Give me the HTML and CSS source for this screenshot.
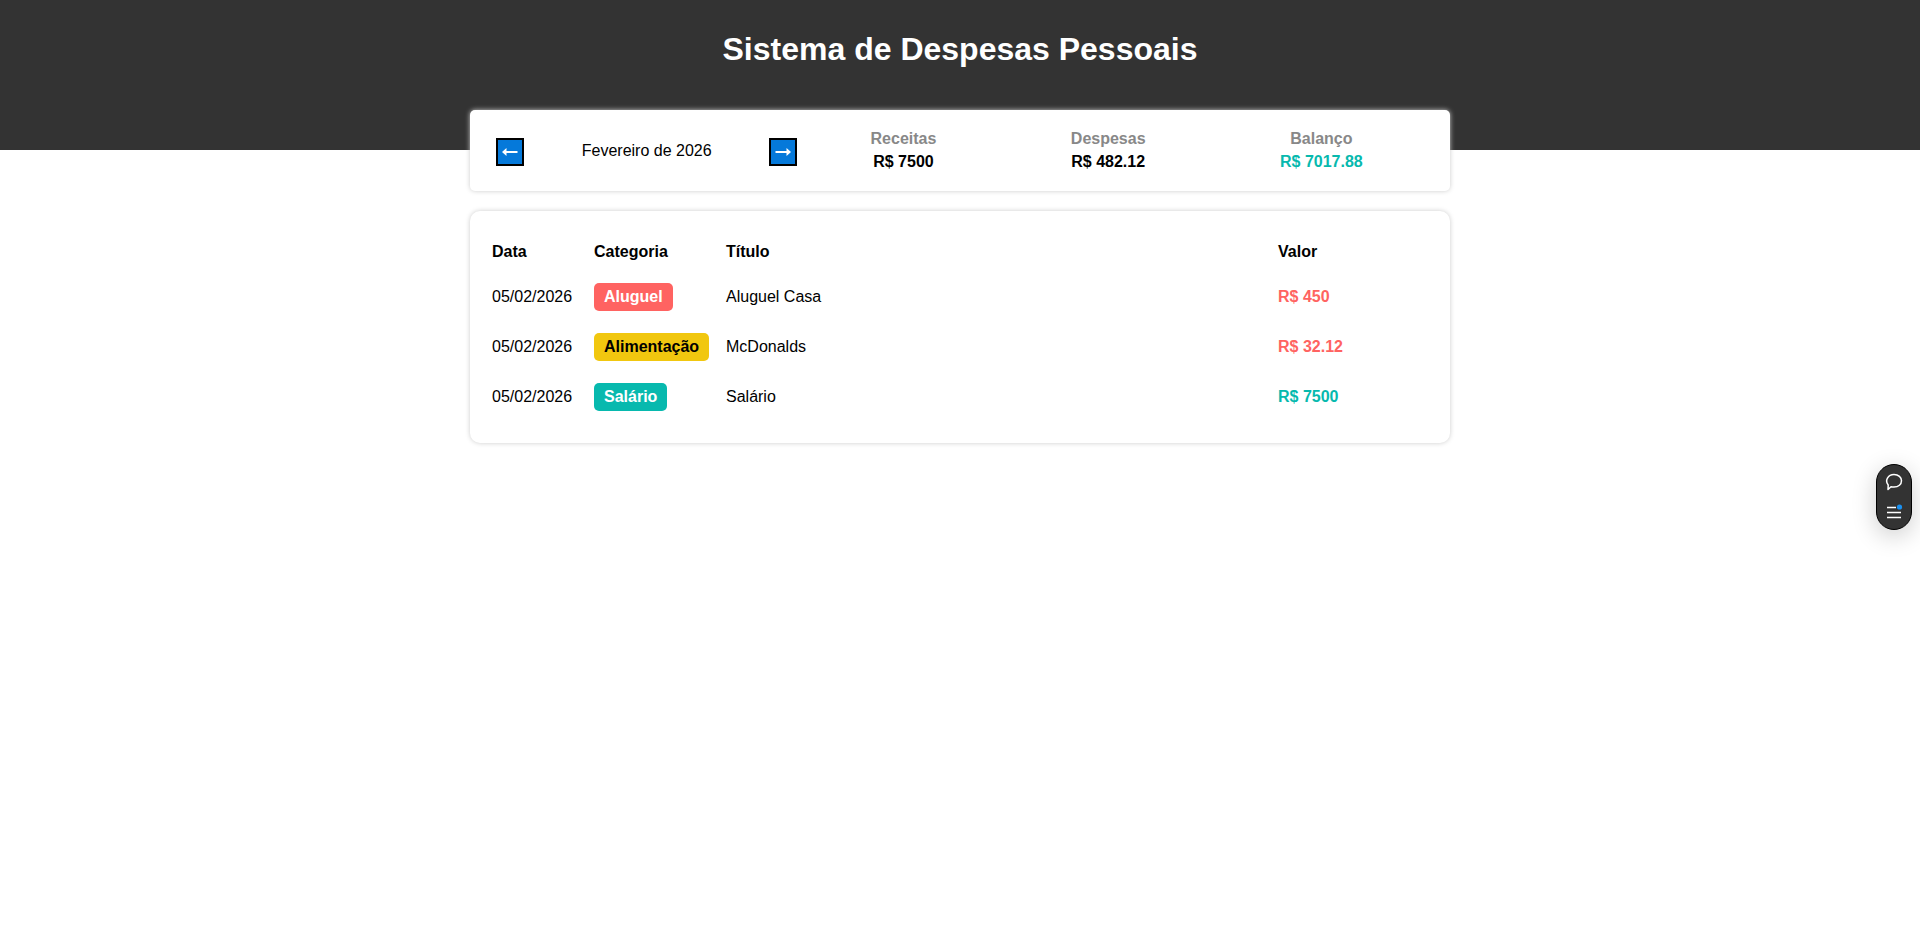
FILE: index.html
```
<!DOCTYPE html>
<html lang="pt-BR">
<head>
    <meta charset="UTF-8">
    <meta name="viewport" content="width=device-width, initial-scale=1.0">
    <title>Sistema de Despesas Pessoais</title>
    <link rel="stylesheet" href="styles.css">
</head>
<body>
    <header class="header">
        <h1>Sistema de Despesas Pessoais</h1>
    </header>
    <main class="container">
        <section class="info">
            <div class="month">
                <div class="month-arrow">
                    <button type="button" aria-label="Mês anterior">
                        <svg width="16" height="8" viewBox="0 0 16 8"><path d="M0 4 4.500 0V3H15.500V5H4.500V8Z" fill="#fff"/></svg>
                    </button>
                </div>
                <div class="month-title">Fevereiro de 2026</div>
                <div class="month-arrow">
                    <button type="button" aria-label="Próximo mês">
                        <svg width="16" height="8" viewBox="0 0 16 8"><path d="M16 4 11.500 0V3H.5V5H11.500V8Z" fill="#fff"/></svg>
                    </button>
                </div>
            </div>
            <div class="resume">
                <div class="resume-item">
                    <div class="resume-label">Receitas</div>
                    <div class="resume-value">R$ 7500</div>
                </div>
                <div class="resume-item">
                    <div class="resume-label">Despesas</div>
                    <div class="resume-value">R$ 482.12</div>
                </div>
                <div class="resume-item">
                    <div class="resume-label">Balanço</div>
                    <div class="resume-value income">R$ 7017.88</div>
                </div>
            </div>
        </section>
        <table class="table">
            <thead>
                <tr>
                    <th class="col-date">Data</th>
                    <th class="col-category">Categoria</th>
                    <th>Título</th>
                    <th class="col-value">Valor</th>
                </tr>
            </thead>
            <tbody>
                <tr>
                    <td>05/02/2026</td>
                    <td><span class="tag tag-rent">Aluguel</span></td>
                    <td>Aluguel Casa</td>
                    <td class="value expense">R$ 450</td>
                </tr>
                <tr>
                    <td>05/02/2026</td>
                    <td><span class="tag tag-food">Alimentação</span></td>
                    <td>McDonalds</td>
                    <td class="value expense">R$ 32.12</td>
                </tr>
                <tr>
                    <td>05/02/2026</td>
                    <td><span class="tag tag-salary">Salário</span></td>
                    <td>Salário</td>
                    <td class="value income">R$ 7500</td>
                </tr>
            </tbody>
        </table>
    </main>
    <div class="toolbar">
        <button type="button" aria-label="Comentários">
            <svg width="18" height="18" viewBox="0 0 18 18"><path d="M3.200 12C-.5 7.500 3 1.500 9 1.500c4.500 0 7.500 2.800 7.500 6.300s-3 6.300-7.500 6.300c-1.100 0-2.100-.1-3-.4L3 16.500Z" fill="none" stroke="#fff" stroke-width="1.500" stroke-linejoin="round"/></svg>
        </button>
        <button type="button" aria-label="Menu">
            <svg width="18" height="18" viewBox="0 0 18 18"><path d="M2 4.500H11M2 9.500H16M2 14.500H16" fill="none" stroke="#fff" stroke-width="1.600"/><circle cx="14.500" cy="4" r="2.600" fill="#1a90f0"/></svg>
        </button>
    </div>
</body>
</html>
```
FILE: styles.css
```
* {
    box-sizing: border-box;
}
body {
    margin: 0;
    font-family: "Liberation Sans", Arial, sans-serif;
    font-size: 16px;
    line-height: 18px;
    color: #000;
    background-color: #fff;
}
.header {
    height: 150px;
    padding-top: 30px;
    background-color: #333;
    text-align: center;
}
.header h1 {
    margin: 0;
    font-size: 32px;
    line-height: 38px;
    color: #fff;
}
.container {
    max-width: 980px;
    margin: -40px auto 50px; /* pulls the first card over the header */
}
.info {
    display: flex;
    align-items: center;
    padding: 20px;
    border-radius: 5px;
    background-color: #fff;
    box-shadow: 0 0 5px #ccc;
}
.month {
    flex: 1;
    display: flex;
    align-items: center;
}
.month-title {
    flex: 1;
    text-align: center;
}
.month-arrow {
    width: 40px;
    padding-top: 3px;
    display: flex;
    justify-content: center;
}
.month-arrow button {
    display: flex;
    align-items: center;
    justify-content: center;
    width: 28px;
    height: 28px;
    padding: 0;
    background-color: #0579da;
    border: 2px solid #000;
    cursor: pointer;
}
.resume {
    flex: 2;
    display: flex;
    justify-content: space-around;
}
.resume-item {
    text-align: center;
    font-weight: bold;
}
.resume-label {
    margin-bottom: 5px;
    color: #888;
}
.table {
    width: 100%;
    margin-top: 20px;
    padding: 20px;
    border-radius: 10px;
    border-spacing: 2px;
    background-color: #fff;
    box-shadow: 0 0 5px #ccc;
}
.table th,
.table td {
    padding: 10px 0;
    text-align: left;
}
.table .col-date {
    width: 100px;
}
.table .col-category {
    width: 130px;
}
.table .col-value {
    width: 150px;
}
.tag {
    display: inline-block;
    padding: 5px 10px;
    border-radius: 5px;
    font-weight: bold;
    color: #fff;
}
.tag-rent {
    background-color: #ff6361;
}
.tag-food {
    background-color: #f1c70f;
    color: #000;
}
.tag-salary {
    background-color: #07b9ae;
}
.value {
    font-weight: bold;
}
.income {
    color: #07b9ae;
}
.expense {
    color: #ff6361;
}
/* Floating toolbar on the right edge */
.toolbar {
    position: fixed;
    right: 8px;
    top: 50%;
    display: flex;
    flex-direction: column;
    justify-content: space-between;
    align-items: center;
    width: 36px;
    height: 66px;
    padding: 8px 0;
    border: 1px solid #000;
    border-radius: 18px;
    background-color: #333;
    box-shadow: 0 6px 24px rgba(0, 0, 0, 0.2);
}
.toolbar button {
    display: flex;
    padding: 0;
    border: none;
    background: none;
    cursor: pointer;
}
```
